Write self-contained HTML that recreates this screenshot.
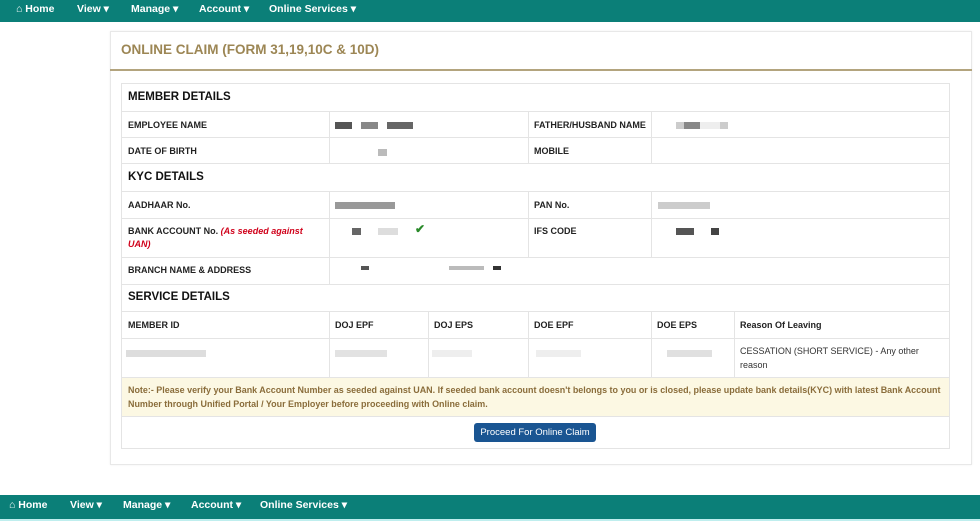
<!DOCTYPE html>
<html><head><meta charset="utf-8"><style>
*{margin:0;padding:0;box-sizing:border-box}
body{width:980px;height:521px;background:#fff;font-family:"Liberation Sans",Arial,sans-serif;position:relative;overflow:hidden;color:#222}
.nav{position:absolute;left:0;width:980px;background:#0b7f78;color:#fff;font-weight:bold;font-size:10.5px}
.nav span{position:absolute}
.panel{position:absolute;left:110px;top:31px;width:862px;height:434px;border:1px solid #e8e8e8;box-shadow:0 0 2px #eee}
.title{position:absolute;left:121px;top:42px;color:#9c8654;font-weight:bold;font-size:13.5px}
.gold{position:absolute;left:110px;top:69px;width:862px;height:2px;background:#b3a47e}
.tbl{position:absolute;left:121px;top:83px;width:829px;height:366px;border:1px solid #e4e4e4}
.h{position:absolute;height:1px;background:#e4e4e4;left:121px;width:829px}
.v{position:absolute;width:1px;background:#e4e4e4}
.t{position:absolute;font-size:9px;font-weight:bold;color:#222}
.sh{position:absolute;font-size:11.5px;font-weight:bold;color:#111;left:128px}
.b{position:absolute;height:7px;background:#777}
.note{position:absolute;left:122px;top:378px;width:827px;height:38px;background:#fcf8e3;color:#8a6d3b;font-size:8.95px;font-weight:bold;padding:5px 6px;line-height:14px}
.btn{position:absolute;left:474px;top:423px;width:122px;height:19px;background:#1a5592;border-radius:3px;color:#fff;font-size:9.5px;text-align:center;line-height:19px}
.n{font-size:9px;position:absolute;color:#333}
</style></head><body>
<div class="nav" style="top:0;height:22px"><span style="left:16px;top:3px">&#8962; Home</span><span style="left:77px;top:3px">View ▾</span><span style="left:131px;top:3px">Manage ▾</span><span style="left:199px;top:3px">Account ▾</span><span style="left:269px;top:3px">Online Services ▾</span></div>
<div class="panel"></div>
<div class="title">ONLINE CLAIM (FORM 31,19,10C &amp; 10D)</div>
<div class="gold"></div>
<div class="tbl"></div>
<div class="h" style="top:111px"></div><div class="h" style="top:137px"></div><div class="h" style="top:163px"></div><div class="h" style="top:191px"></div><div class="h" style="top:218px"></div><div class="h" style="top:257px"></div><div class="h" style="top:284px"></div><div class="h" style="top:311px"></div><div class="h" style="top:338px"></div><div class="h" style="top:377px"></div><div class="h" style="top:416px"></div>
<div class="v" style="left:329px;top:111px;height:52px"></div><div class="v" style="left:528px;top:111px;height:52px"></div><div class="v" style="left:651px;top:111px;height:52px"></div>
<div class="v" style="left:329px;top:191px;height:93px"></div><div class="v" style="left:528px;top:191px;height:66px"></div><div class="v" style="left:651px;top:191px;height:66px"></div>
<div class="v" style="left:329px;top:311px;height:66px"></div><div class="v" style="left:428px;top:311px;height:66px"></div><div class="v" style="left:528px;top:311px;height:66px"></div><div class="v" style="left:651px;top:311px;height:66px"></div><div class="v" style="left:734px;top:311px;height:66px"></div>
<div class="sh" style="top:91px">MEMBER DETAILS</div>
<div class="t" style="left:128px;top:120px">EMPLOYEE NAME</div>
<div class="t" style="left:534px;top:120px">FATHER/HUSBAND NAME</div>
<div class="t" style="left:128px;top:146px">DATE OF BIRTH</div>
<div class="t" style="left:534px;top:146px">MOBILE</div>
<div class="sh" style="top:171px">KYC DETAILS</div>
<div class="t" style="left:128px;top:200px">AADHAAR No.</div>
<div class="t" style="left:534px;top:200px">PAN No.</div>
<div class="t" style="left:128px;top:225px;line-height:13px;width:182px">BANK ACCOUNT No. <i style="color:#d0021b">(As seeded against UAN)</i></div>
<div class="t" style="left:534px;top:226px">IFS CODE</div>
<div class="t" style="left:128px;top:265px">BRANCH NAME &amp; ADDRESS</div>
<div class="sh" style="top:291px">SERVICE DETAILS</div>
<div class="t" style="left:128px;top:320px">MEMBER ID</div><div class="t" style="left:335px;top:320px">DOJ EPF</div><div class="t" style="left:434px;top:320px">DOJ EPS</div><div class="t" style="left:534px;top:320px">DOE EPF</div><div class="t" style="left:657px;top:320px">DOE EPS</div><div class="t" style="left:740px;top:320px">Reason Of Leaving</div>
<div class="n" style="left:740px;top:345px;line-height:13.5px;width:190px">CESSATION (SHORT SERVICE) - Any other reason</div>
<div class="b" style="left:335px;top:122px;width:78px;background:linear-gradient(90deg,#555 0 17px,#fff 17px 26px,#888 26px 43px,#fff 43px 52px,#666 52px)"></div>
<div class="b" style="left:676px;top:122px;width:52px;background:linear-gradient(90deg,#ccc 0 8px,#888 8px 24px,#eee 24px 44px,#ccc 44px)"></div>
<div class="b" style="left:378px;top:149px;width:9px;background:#bbb"></div>
<div class="b" style="left:335px;top:202px;width:60px;background:#999"></div>
<div class="b" style="left:658px;top:202px;width:52px;background:#ccc"></div>
<div class="b" style="left:352px;top:228px;width:9px;background:#666"></div>
<div class="b" style="left:378px;top:228px;width:20px;background:#ddd"></div>
<div style="position:absolute;left:415px;top:222px;color:#2a8a2a;font-size:12px;font-weight:bold">✔</div>
<div class="b" style="left:676px;top:228px;width:18px;background:#555"></div><div class="b" style="left:711px;top:228px;width:8px;background:#444"></div>
<div class="b" style="left:361px;top:266px;width:8px;height:4px;background:#555"></div>
<div class="b" style="left:449px;top:266px;width:35px;height:4px;background:#bbb"></div><div class="b" style="left:493px;top:266px;width:8px;height:4px;background:#333"></div>
<div class="b" style="left:126px;top:350px;width:80px;background:#ddd"></div>
<div class="b" style="left:335px;top:350px;width:52px;background:#e2e2e2"></div>
<div class="b" style="left:432px;top:350px;width:40px;background:#eee"></div>
<div class="b" style="left:536px;top:350px;width:45px;background:#eee"></div>
<div class="b" style="left:667px;top:350px;width:45px;background:#e0e0e0"></div>
<div class="note">Note:- Please verify your Bank Account Number as seeded against UAN. If seeded bank account doesn't belongs to you or is closed, please update bank details(KYC) with latest Bank Account Number through Unified Portal / Your Employer before proceeding with Online claim.</div>
<div class="btn">Proceed For Online Claim</div>
<div class="nav" style="top:495px;height:24px"><span style="left:9px;top:4px">&#8962; Home</span><span style="left:70px;top:4px">View ▾</span><span style="left:123px;top:4px">Manage ▾</span><span style="left:191px;top:4px">Account ▾</span><span style="left:260px;top:4px">Online Services ▾</span></div>
<div style="position:absolute;left:0;top:519px;width:980px;height:2px;background:#bfeeee"></div>
</body></html>
